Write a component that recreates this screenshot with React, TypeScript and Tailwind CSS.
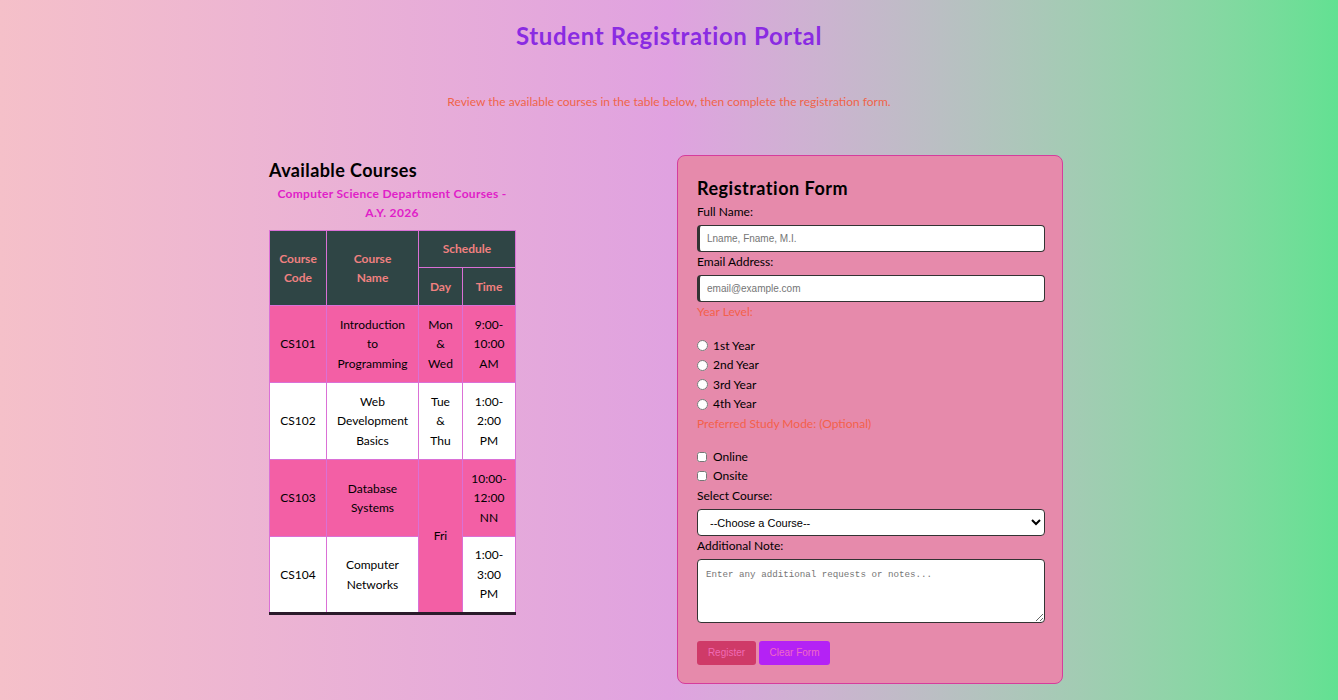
import { useState } from 'react'

interface Course {
  code: string
  name: string
  day?: string
  time: string
  pink: boolean
}

const courses: Course[] = [
  { code: 'CS101', name: 'Introduction to Programming', day: 'Mon & Wed', time: '9:00-10:00 AM', pink: true },
  { code: 'CS102', name: 'Web Development Basics', day: 'Tue & Thu', time: '1:00-2:00 PM', pink: false },
  { code: 'CS103', name: 'Database Systems', day: 'Fri', time: '10:00-12:00 NN', pink: true },
  { code: 'CS104', name: 'Computer Networks', time: '1:00-3:00 PM', pink: false },
]

const years = ['1st Year', '2nd Year', '3rd Year', '4th Year']

const CourseTable = () => {
  return (
    <div className="w-[246px]">
      <h2 className="pt-[2px] text-[18px] leading-[27px] font-bold tracking-[0.4px] text-black">Available Courses</h2>
      <p className="px-[6px] text-center text-[12px] leading-[19px] font-bold tracking-[0.3px] text-[#e020c8]">
        Computer Science Department Courses - A.Y. 2026
      </p>
      <table className="mt-[8px] w-[246px] table-fixed border-collapse border-b-[3px] border-b-[#2b1b2b] text-center text-[12px] leading-[19.5px]">
        <colgroup>
          <col className="w-[57px]" />
          <col className="w-[92px]" />
          <col className="w-[44px]" />
          <col className="w-[53px]" />
        </colgroup>
        <thead className="bg-[#2f4545] font-bold text-[#f08080]">
          <tr className="h-[37px]">
            <th rowSpan={2} className="border border-[#da70d6] px-[8px]">Course Code</th>
            <th rowSpan={2} className="border border-[#da70d6] px-[14px]">Course Name</th>
            <th colSpan={2} className="border border-[#da70d6]">Schedule</th>
          </tr>
          <tr className="h-[38px]">
            <th className="border border-[#da70d6]">Day</th>
            <th className="border border-[#da70d6]">Time</th>
          </tr>
        </thead>
        <tbody className="font-normal text-black">
          {courses.map((c) => {
            const bg = c.pink ? 'bg-[#f35fa5]' : 'bg-white'
            return (
              <tr key={c.code} className="h-[77px]">
                <td className={`border border-[#da70d6] ${bg}`}>{c.code}</td>
                <td className={`border border-[#da70d6] px-[6px] ${bg}`}>{c.name}</td>
                {c.day === 'Fri' ? (
                  <td rowSpan={2} className="border border-[#da70d6] bg-[#f35fa5]">Fri</td>
                ) : c.day ? (
                  <td className={`border border-[#da70d6] px-[8px] ${bg}`}>{c.day}</td>
                ) : null}
                <td className={`border border-[#da70d6] px-[6px] ${bg}`}>{c.time}</td>
              </tr>
            )
          })}
        </tbody>
      </table>
    </div>
  )
}

const RegistrationForm = () => {
  const [year, setYear] = useState('')
  const [modes, setModes] = useState<string[]>([])

  const toggleMode = (m: string) => {
    setModes(modes.includes(m) ? modes.filter(x => x !== m) : [...modes, m])
  }

  const inputCls =
    "block w-full h-[27px] mt-[3px] rounded-[4px] border border-[#333] border-l-[3px] bg-white pl-[7px] text-[10px] text-black placeholder:text-[#757575] font-['Liberation_Sans',Arial,sans-serif] outline-none"

  return (
    <form
      onSubmit={(e) => e.preventDefault()}
      className="w-[386px] rounded-[8px] border border-[#d63c9c] bg-[#e68aab] pt-[19px] pb-[18px] pl-[19px] pr-[17px] text-[12px] leading-[20px] text-black"
    >
      <h2 className="text-[18px] leading-[27px] font-bold tracking-[0.5px]">Registration Form</h2>

      <label className="block">Full Name:</label>
      <input type="text" placeholder="Lname, Fname, M.I." className={inputCls} />

      <label className="block">Email Address:</label>
      <input type="email" placeholder="email@example.com" className={inputCls} />

      <p className="text-[#f4604a]">Year Level:</p>
      <div className="mt-[14px] flex flex-col">
        {years.map((y) => (
          <label key={y} className="flex h-[19.5px] items-center gap-[5px]">
            <input
              type="radio"
              name="year"
              checked={year === y}
              onChange={() => setYear(y)}
              className="m-0 h-[11px] w-[11px]"
            />
            {y}
          </label>
        ))}
      </div>

      <p className="text-[#f4604a]">Preferred Study Mode: (Optional)</p>
      <div className="mt-[13px] flex flex-col">
        {['Online', 'Onsite'].map((m) => (
          <label key={m} className="flex h-[19.5px] items-center gap-[6px]">
            <input
              type="checkbox"
              checked={modes.includes(m)}
              onChange={() => toggleMode(m)}
              className="m-0 h-[10px] w-[10px]"
            />
            {m}
          </label>
        ))}
      </div>

      <label className="block">Select Course:</label>
      <select className="mt-[3px] block h-[27px] w-full rounded-[4px] border border-[#333] bg-white pl-[8px] pr-[4px] text-[11px] text-black font-['Liberation_Sans',Arial,sans-serif]">
        <option>--Choose a Course--</option>
        {courses.map((c) => (
          <option key={c.code}>{c.code} - {c.name}</option>
        ))}
      </select>

      <label className="block">Additional Note:</label>
      <textarea
        placeholder="Enter any additional requests or notes..."
        className="mt-[3px] block h-[64px] w-full rounded-[4px] border border-[#333] bg-white px-[8px] py-[9px] text-[9.2px] leading-[12px] placeholder:text-[#757575] font-['Liberation_Mono',monospace]"
      />

      <div className="mt-[18px] flex gap-[3px] font-['Liberation_Sans',Arial,sans-serif] text-[10px]">
        <button type="submit" className="h-[24px] w-[59px] rounded-[3px] bg-[#cf3a68] text-[#f06ab5]">
          Register
        </button>
        <button type="reset" className="h-[24px] w-[71px] rounded-[3px] bg-[#b422f5] text-[#f068c8]">
          Clear Form
        </button>
      </div>
    </form>
  )
}

export default function App() {
  return (
    <div className="min-h-[700px] bg-linear-to-r from-[#f5c0c9] via-[#e0a2e0] to-[#62e192] font-['Lato','Noto_Sans',sans-serif] pb-[16px]">
      <h1 className="pt-[20px] text-center text-[24px] leading-[32px] font-bold tracking-[0.65px] text-[#8a2be2]">
        Student Registration Portal
      </h1>
      <p className="mt-[40px] text-center text-[12px] leading-[19px] text-[#f0644a]">
        Review the available courses in the table below, then complete the registration form.
      </p>
      <div className="mt-[44px] flex items-start justify-center gap-[162px] pr-[6px]">
        <CourseTable />
        <RegistrationForm />
      </div>
    </div>
  )
}
